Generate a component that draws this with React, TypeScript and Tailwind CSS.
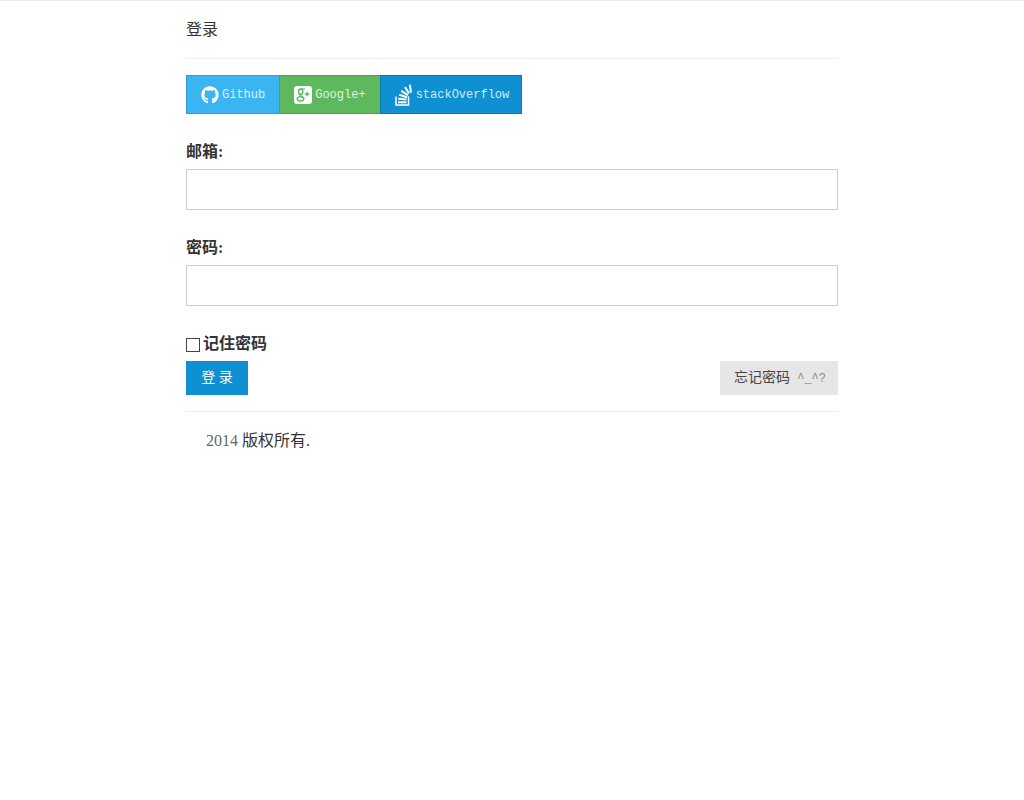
import React from "react";
import { FaGithub } from "react-icons/fa";

const latin = "font-['Liberation_Mono','Noto_Sans_CJK_SC',monospace]";

const GooglePlusIcon = () => (
  <svg viewBox="0 0 18 18" className="size-[18px]" aria-hidden="true">
    <rect width="18" height="18" rx="3" fill="#fff" />
    <g fill="none" stroke="#5eb95e">
      <ellipse cx="6.7" cy="5.7" rx="2.1" ry="2.6" strokeWidth="1.5" />
      <path d="M6.5 2.9h4.6" strokeWidth="1" />
      <path d="M6.4 8.4c-1.8 1.8 3.6 1.8 3.5 4.4" strokeWidth="1.4" />
      <ellipse cx="6.5" cy="12.8" rx="3.3" ry="2.2" strokeWidth="1.3" />
      <path d="M10.8 8h4.6M13.1 5.7v4.6" strokeWidth="1.3" />
    </g>
  </svg>
);

const StackOverflowIcon = () => (
  <svg viewBox="0 0 18 22" className="h-[22px] w-[18px]" aria-hidden="true">
    <g fill="none" stroke="#fff">
      <path d="M1 12.5v8.5h12.5v-8.5" strokeWidth="1.5" />
      <path d="M3 18.3h8.5" strokeWidth="2" />
      <path d="M3.2 14.7l8.2.9" strokeWidth="2" />
      <path d="M4.2 10.8l7.8 2.4" strokeWidth="2" />
      <path d="M6.3 6.8l6.6 4.4" strokeWidth="2" />
      <path d="M10 3l4 6.6" strokeWidth="2" />
      <path d="M14.8 0.6l1.2 8" strokeWidth="2" />
    </g>
  </svg>
);

type FieldProps = { id: string; label: string; type: string };

const Field: React.FC<FieldProps> = ({ id, label, type }) => (
  <div className="mb-[26px]">
    <label htmlFor={id} className="mb-[5px] block leading-6 font-bold">
      {label}
    </label>
    <input
      id={id}
      name={id}
      type={type}
      className="block h-[41px] w-full border border-[#ccc] bg-white px-2 text-base outline-none focus:border-[#3bb4f2]"
    />
  </div>
);

const App: React.FC = () => {
  return (
    <div className="border-t border-[#eee] bg-white font-['Liberation_Serif','Noto_Sans_CJK_SC',serif] text-base text-[#333]">
      <main className="mx-auto w-[calc(100%-32px)] max-w-[652px]">
        <h1 className="border-b border-[#eee] pt-[17px] pb-4 leading-6">登录</h1>
        <div className={`mt-4 mb-[26px] flex text-xs text-white/80 ${latin}`}>
          <a
            href="#github"
            className="flex h-[39px] items-center gap-[3px] border border-[#2ba0dd] bg-[#3bb4f2] px-3.5"
          >
            <FaGithub className="size-[18px] text-white" />
            Github
          </a>
          <a
            href="#google"
            className="-ml-px flex h-[39px] items-center gap-[3px] border border-[#4aa64a] bg-[#5eb95e] px-3.5"
          >
            <GooglePlusIcon />
            Google+
          </a>
          <a
            href="#stackoverflow"
            className="-ml-px flex h-[39px] items-center gap-[3px] border border-[#0c79b1] bg-[#0e90d2] pr-3 pl-3.5"
          >
            <StackOverflowIcon />
            stackOverflow
          </a>
        </div>
        <form onSubmit={(e) => e.preventDefault()}>
          <Field id="email" label="邮箱:" type="email" />
          <Field id="password" label="密码:" type="password" />
          <label className="flex items-center gap-[3px] leading-6 font-bold">
            <input
              type="checkbox"
              className="mt-0.5 size-3.5 appearance-none border border-[#444] bg-white checked:bg-[#0e90d2]"
            />
            记住密码
          </label>
          <div className="mt-[5px] flex items-center justify-between text-sm">
            <button type="submit" className="h-[34px] min-w-[62px] bg-[#0e90d2] px-3.5 text-white">
              登 录
            </button>
            <button type="button" className={`h-[34px] bg-[#e6e6e6] pr-3 pl-3.5 text-[#444] ${latin}`}>
              忘记密码<span className="text-xs text-[#888]"> ^_^?</span>
            </button>
          </div>
        </form>
        <footer className="mt-4 border-t border-[#eee] px-5 pt-[17px] leading-6">
          <p>
            <span className="text-[#666]">2014</span> 版权所有.
          </p>
        </footer>
      </main>
    </div>
  );
};

export default App;
